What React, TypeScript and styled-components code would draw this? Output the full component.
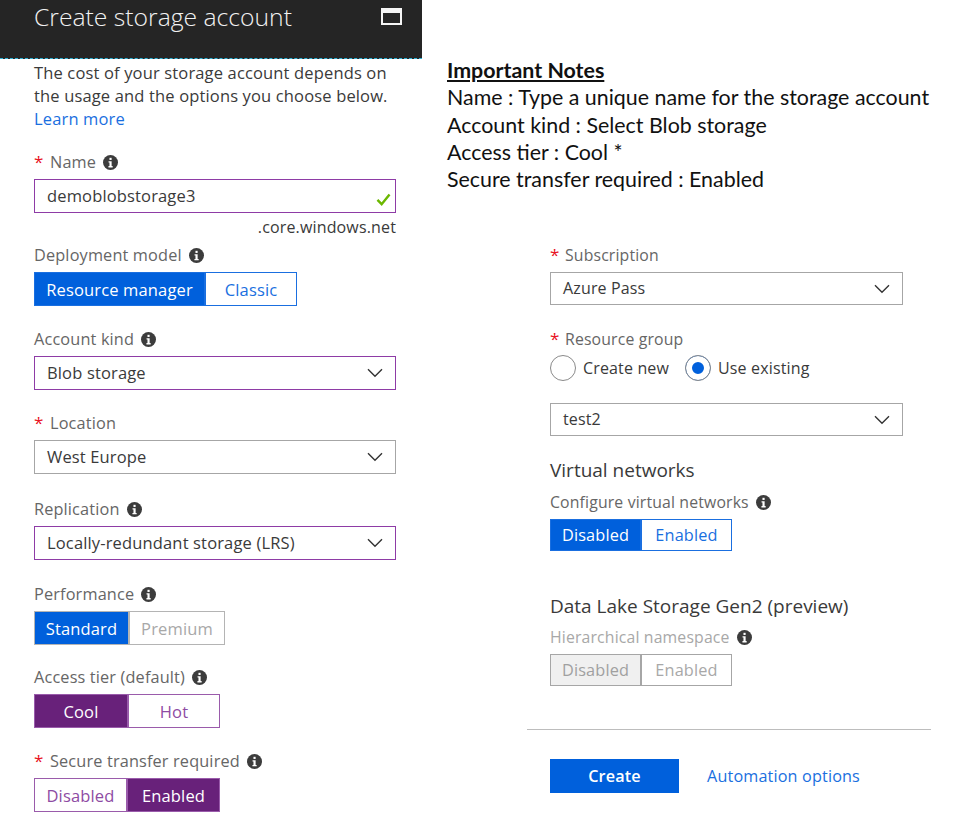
import React, { FC } from 'react'
import styled, { createGlobalStyle } from 'styled-components'

const blue = '#0060dc'
const purple = '#68217a'

const GlobalStyle = createGlobalStyle`
	html, body {
		margin: 0;
		padding: 0;
		background: #fff;
	}
	body {
		font-family: "Open Sans", "Liberation Sans", sans-serif;
	}
`

const InfoIcon: FC = () => (
	<InfoSvg viewBox='0 0 16 16'>
		<circle cx='8' cy='8' r='8' fill='#3c3c3c' />
		<rect x='6.9' y='3' width='2.3' height='2.3' fill='#fff' />
		<path d='M5.9 6.6h3.3v5.2h1.1v1.4H5.8v-1.4h1.1V8H5.9z' fill='#fff' />
	</InfoSvg>
)

const Chevron: FC = () => (
	<ChevronSvg viewBox='0 0 16 10'>
		<path d='M1 1.2l7 7 7-7' fill='none' stroke='#333' strokeWidth='1.4' />
	</ChevronSvg>
)

interface ISegment {
	tone: 'blue' | 'purple' | 'muted' | 'off'
	items: { label: string; width: number; active?: boolean }[]
}

const Segments: FC<ISegment> = ({ tone, items }) => (
	<Toggle>
		{items.map(item => (
			<Segment key={item.label} $tone={tone} $active={item.active} $width={item.width}>
				{item.label}
			</Segment>
		))}
	</Toggle>
)

const Label: FC<{ text: string; required?: boolean; info?: boolean; muted?: boolean }> = ({ text, required, info, muted }) => (
	<LabelRow>
		{required && <Star>*</Star>}
		<LabelText $muted={muted}>{text}</LabelText>
		{info && <InfoIcon />}
	</LabelRow>
)

const App: FC = () => (
	<>
		<GlobalStyle />
		<Page>
			<LeftColumn>
				<Header>
					<Title>Create storage account</Title>
					<MaximizeIcon />
				</Header>
				<Blade>
					<Intro>
						The cost of your storage account depends on
						<br />
						the usage and the options you choose below.
						<br />
						<TextLink>Learn more</TextLink>
					</Intro>

					<Field $top={21}>
						<Label text='Name' required info />
						<Control $focus>
							<span>demoblobstorage3</span>
							<CheckSvg viewBox='0 0 16 14'>
								<path d='M1.5 7.5l4.5 4.5 8.5-10.5' fill='none' stroke='#6bb700' strokeWidth='2.6' />
							</CheckSvg>
						</Control>
						<Suffix>.core.windows.net</Suffix>
					</Field>

					<Field $top={4}>
						<Label text='Deployment model' info />
						<Segments
							tone='blue'
							items={[
								{ label: 'Resource manager', width: 171, active: true },
								{ label: 'Classic', width: 92 },
							]}
						/>
					</Field>

					<Field $top={22}>
						<Label text='Account kind' info />
						<Control $focus>
							<span>Blob storage</span>
							<Chevron />
						</Control>
					</Field>

					<Field $top={22}>
						<Label text='Location' required />
						<Control>
							<span>West Europe</span>
							<Chevron />
						</Control>
					</Field>

					<Field $top={24}>
						<Label text='Replication' info />
						<Control $focus>
							<span>Locally-redundant storage (LRS)</span>
							<Chevron />
						</Control>
					</Field>

					<Field $top={23}>
						<Label text='Performance' info />
						<Segments
							tone='off'
							items={[
								{ label: 'Standard', width: 95, active: true },
								{ label: 'Premium', width: 96 },
							]}
						/>
					</Field>

					<Field $top={21}>
						<Label text='Access tier (default)' info />
						<Segments
							tone='purple'
							items={[
								{ label: 'Cool', width: 94, active: true },
								{ label: 'Hot', width: 92 },
							]}
						/>
					</Field>

					<Field $top={22}>
						<Label text='Secure transfer required' required info />
						<Segments
							tone='purple'
							items={[
								{ label: 'Disabled', width: 93 },
								{ label: 'Enabled', width: 93, active: true },
							]}
						/>
					</Field>
				</Blade>
			</LeftColumn>

			<RightColumn>
				<Notes>
					<NotesTitle>Important Notes</NotesTitle>
					<div>Name : Type a unique name for the storage account</div>
					<div>Account kind : Select Blob storage</div>
					<div>Access tier : Cool *</div>
					<div>Secure transfer required : Enabled</div>
				</Notes>

				<RightForm>
					<Field $top={0}>
						<Label text='Subscription' required />
						<Control>
							<span>Azure Pass</span>
							<Chevron />
						</Control>
					</Field>

					<Field $top={23}>
						<Label text='Resource group' required />
						<RadioRow>
							<Radio>
								<RadioDot />
								Create new
							</Radio>
							<Radio>
								<RadioDot $checked />
								Use existing
							</Radio>
						</RadioRow>
						<Control>
							<span>test2</span>
							<Chevron />
						</Control>
					</Field>

					<SectionTitle $top={21}>Virtual networks</SectionTitle>
					<Field $top={8}>
						<Label text='Configure virtual networks' info />
						<Segments
							tone='blue'
							items={[
								{ label: 'Disabled', width: 91, active: true },
								{ label: 'Enabled', width: 91 },
							]}
						/>
					</Field>

					<SectionTitle $top={42}>Data Lake Storage Gen2 (preview)</SectionTitle>
					<Field $top={7}>
						<Label text='Hierarchical namespace' muted info />
						<Segments
							tone='muted'
							items={[
								{ label: 'Disabled', width: 91, active: true },
								{ label: 'Enabled', width: 91 },
							]}
						/>
					</Field>
				</RightForm>

				<Divider />

				<Actions>
					<PrimaryButton>Create</PrimaryButton>
					<TextLink>Automation options</TextLink>
				</Actions>
			</RightColumn>
		</Page>
	</>
)

export default App

const Page = styled.div`
	width: 953px;
	height: 820px;
	display: flex;
	overflow: hidden;
	color: #3a3a3a;
	font-size: 16.5px;
	letter-spacing: 0.15px;
`

const LeftColumn = styled.div`
	width: 422px;
	flex-shrink: 0;
`

const Header = styled.div`
	height: 59px;
	box-sizing: border-box;
	padding: 0 20px 0 34px;
	display: flex;
	justify-content: space-between;
	align-items: flex-start;
	background: #252525;
	border-bottom: 1px dashed #2fb4d8;
`

const Title = styled.div`
	color: #f2f2f2;
	font-size: 24.7px;
	font-weight: 300;
	letter-spacing: 0;
	line-height: 33px;
`

const MaximizeIcon = styled.div`
	width: 21px;
	height: 17px;
	box-sizing: border-box;
	margin-top: 8px;
	border: 2px solid #f5f5f5;
	border-top-width: 5px;
`

const Blade = styled.div`
	padding: 2px 26px 0 34px;
`

const Intro = styled.div`
	line-height: 23px;
	white-space: nowrap;
`

const TextLink = styled.span`
	color: #1a6fe0;
`

const Field = styled.div<{ $top: number }>`
	margin-top: ${p => p.$top}px;
`

const LabelRow = styled.div`
	height: 22px;
	margin-bottom: 6px;
	display: flex;
	align-items: center;
	color: #666;
`

const Star = styled.span`
	width: 16px;
	color: #e81123;
	font-size: 17px;
	line-height: 22px;
`

const LabelText = styled.span<{ $muted?: boolean }>`
	font-size: 16.3px;
	color: ${p => (p.$muted ? '#a8a8a8' : '#666')};
`

const InfoSvg = styled.svg`
	width: 15px;
	height: 15px;
	margin-left: 7px;
	flex-shrink: 0;
`

const Control = styled.div<{ $focus?: boolean }>`
	height: 34px;
	box-sizing: border-box;
	padding: 0 12px 2px;
	display: flex;
	align-items: center;
	justify-content: space-between;
	border: 1px solid ${p => (p.$focus ? '#8e3ba6' : '#a6a6a6')};
`

const ChevronSvg = styled.svg`
	width: 16px;
	height: 10px;
	margin-top: 2px;
`

const CheckSvg = styled.svg`
	width: 15px;
	height: 13px;
	margin: 8px -8px 0 0;
`

const Suffix = styled.div`
	height: 27px;
	font-size: 16px;
	line-height: 28px;
	text-align: right;
`

const Toggle = styled.div`
	display: flex;
`

const segmentColors = {
	blue: { on: blue, onText: '#fff', border: '#1a6fe0', text: '#1a6fe0' },
	purple: { on: purple, onText: '#fff', border: '#9a5bab', text: '#8e4ba3' },
	off: { on: blue, onText: '#fff', border: '#b4b4b4', text: '#a8a8a8' },
	muted: { on: '#f0f0f0', onText: '#a0a0a0', border: '#a6a6a6', text: '#a8a8a8' },
}

const Segment = styled.div<{ $tone: ISegment['tone']; $active?: boolean; $width: number }>`
	width: ${p => p.$width}px;
	height: 34px;
	box-sizing: border-box;
	display: flex;
	align-items: center;
	justify-content: center;
	white-space: nowrap;
	border: 1px solid ${p => segmentColors[p.$tone].border};
	background: ${p => (p.$active ? segmentColors[p.$tone].on : '#fff')};
	color: ${p => (p.$active ? segmentColors[p.$tone].onText : segmentColors[p.$tone].text)};
`

const RightColumn = styled.div`
	flex: 1;
	min-width: 0;
	padding-left: 25px;
`

const Notes = styled.div`
	padding-top: 57px;
	height: 135px;
	font-family: Lato, "Liberation Sans", sans-serif;
	font-size: 21.4px;
	line-height: 27.3px;
	letter-spacing: 0;
	color: #111;
	white-space: nowrap;
`

const NotesTitle = styled.div`
	font-weight: 700;
	text-decoration: underline;
`

const RightForm = styled.div`
	width: 353px;
	margin: 52px 0 0 103px;
	font-size: 16px;

	${LabelText} {
		font-size: 15.8px;
	}

	${Star} {
		width: 15px;
	}

	${Control} {
		height: 33px;
	}

	${Segment} {
		height: 32px;
		font-size: 16.3px;
	}
`

const RadioRow = styled.div`
	height: 29px;
	margin: -3px 0 21px;
	display: flex;
	align-items: center;
	gap: 16px;
`

const Radio = styled.div`
	display: flex;
	align-items: center;
	gap: 7px;
`

const RadioDot = styled.span<{ $checked?: boolean }>`
	width: 26px;
	height: 26px;
	box-sizing: border-box;
	border-radius: 50%;
	border: 1px solid #8a8a8a;
	background: ${p => (p.$checked ? blue : '#fff')};
	box-shadow: ${p => (p.$checked ? 'inset 0 0 0 6px #fff' : 'none')};
`

const SectionTitle = styled.div<{ $top: number }>`
	margin-top: ${p => p.$top}px;
	color: #3a3a3a;
	font-size: 19px;
	letter-spacing: 0;
	line-height: 26px;
`

const Divider = styled.div`
	width: 404px;
	height: 1px;
	margin: 43px 0 0 80px;
	background: #bdbdbd;
`

const Actions = styled.div`
	margin: 29px 0 0 103px;
	display: flex;
	align-items: center;
	gap: 28px;
	font-size: 16.2px;
`

const PrimaryButton = styled.div`
	width: 129px;
	height: 34px;
	display: flex;
	align-items: center;
	justify-content: center;
	background: ${blue};
	color: #fff;
	font-weight: 600;
`
